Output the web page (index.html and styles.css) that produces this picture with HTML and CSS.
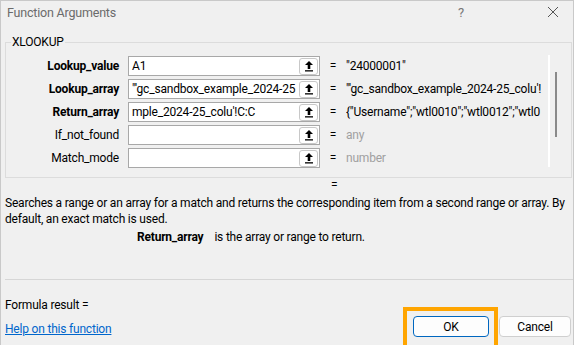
FILE: index.html
```html
<!DOCTYPE html>
<html>
<head>
	<title>Function Arguments</title>
	<link rel="stylesheet" href="styles.css">
</head>
<body>
<div class="dialog">
	<div class="titlebar">
		<span class="title">Function Arguments</span>
		<span class="tb-help">?</span>
		<span class="tb-close">
			<svg width="12" height="12" viewBox="0 0 12 12"><path d="M1 1L11 11M11 1L1 11" stroke="#555" stroke-width="1"/></svg>
		</span>
	</div>

	<fieldset class="group">
		<legend>XLOOKUP</legend>
		<div class="args">
			<div class="rows">
				<div class="row">
					<span class="label req">Lookup_value</span>
					<span class="box"><span class="box-text">A1</span><span class="ref"><svg width="10" height="12" viewBox="0 0 10 12"><path d="M5 1L9 5H6.3V9H3.7V5H1Z" fill="#000"/><rect x="1" y="10.2" width="8" height="1.3" fill="#000"/></svg></span></span>
					<span class="eq">=</span>
					<span class="val">"24000001"</span>
				</div>
				<div class="row">
					<span class="label req">Lookup_array</span>
					<span class="box"><span class="box-text">"'gc_sandbox_example_2024-25</span><span class="ref"><svg width="10" height="12" viewBox="0 0 10 12"><path d="M5 1L9 5H6.3V9H3.7V5H1Z" fill="#000"/><rect x="1" y="10.2" width="8" height="1.3" fill="#000"/></svg></span></span>
					<span class="eq">=</span>
					<span class="val">"'gc_sandbox_example_2024-25_colu'!</span>
				</div>
				<div class="row">
					<span class="label req">Return_array</span>
					<span class="box"><span class="box-text">mple_2024-25_colu'!C:C</span><span class="ref"><svg width="10" height="12" viewBox="0 0 10 12"><path d="M5 1L9 5H6.3V9H3.7V5H1Z" fill="#000"/><rect x="1" y="10.2" width="8" height="1.3" fill="#000"/></svg></span></span>
					<span class="eq">=</span>
					<span class="val">{"Username";"wtl0010";"wtl0012";"wtl0</span>
				</div>
				<div class="row">
					<span class="label">If_not_found</span>
					<span class="box"><span class="box-text"></span><span class="ref"><svg width="10" height="12" viewBox="0 0 10 12"><path d="M5 1L9 5H6.3V9H3.7V5H1Z" fill="#000"/><rect x="1" y="10.2" width="8" height="1.3" fill="#000"/></svg></span></span>
					<span class="eq">=</span>
					<span class="val hint">any</span>
				</div>
				<div class="row">
					<span class="label">Match_mode</span>
					<span class="box"><span class="box-text"></span><span class="ref"><svg width="10" height="12" viewBox="0 0 10 12"><path d="M5 1L9 5H6.3V9H3.7V5H1Z" fill="#000"/><rect x="1" y="10.2" width="8" height="1.3" fill="#000"/></svg></span></span>
					<span class="eq">=</span>
					<span class="val hint">number</span>
				</div>
			</div>
			<div class="scroll"><div class="thumb"></div></div>
		</div>
	</fieldset>

	<div class="result-eq">=</div>

	<p class="desc">Searches a range or an array for a match and returns the corresponding item from a second range or array. By default, an exact match is used.</p>

	<p class="argdesc"><b>Return_array</b><span>is the array or range to return.</span></p>

	<div class="footer">
		<div class="footer-left">
			<div class="formula">Formula result =</div>
			<a class="help" href="#">Help on this function</a>
		</div>
		<div class="buttons">
			<span class="focus"><button class="btn ok">OK</button></span>
			<button class="btn">Cancel</button>
		</div>
	</div>
</div>
</body>
</html>
```

FILE: styles.css
```css
html, body {
	margin:0;
	padding:0;
}
body {
	background-color:#f0f0f0;
	font-family:Roboto, "Noto Sans", sans-serif;
	font-size:12px;
	letter-spacing:-0.2px;
	color:#000;
	width:574px;
	height:345px;
	overflow:hidden;
}
.dialog {
	height:345px;
	box-sizing:border-box;
	border:1px solid #c9c9c9;
	border-bottom:none;
	display:flex;
	flex-direction:column;
}
.titlebar {
	height:24px;
	box-sizing:border-box;
	padding:0 0 2px 6px;
	flex:none;
	display:flex;
	align-items:center;
	color:#6b6b6b;
	font-size:12.5px;
}
.title {
	flex:1;
}
.tb-help {
	width:12px;
	margin-right:77px;
	font-size:13px;
	color:#777;
}
.tb-close {
	width:12px;
	margin-right:14px;
	display:flex;
}
.group {
	flex:none;
	margin:10px 1px 0 4px;
	padding:7px 0 0 0;
	border:1px solid #dcdcdc;
	height:143px;
	box-sizing:border-box;
}
.group legend {
	padding:0 1px;
	margin-left:5px;
	line-height:14px;
}
.args {
	display:flex;
}
.rows {
	display:flex;
	flex-direction:column;
	gap:3px;
	width:542px;
	flex:none;
}
.row {
	display:flex;
	align-items:center;
	height:20px;
}
.label {
	width:113px;
	flex:none;
	text-align:right;
	white-space:nowrap;
}
.label.req {
	font-weight:bold;
}
.box {
	width:192px;
	flex:none;
	margin-left:9px;
	height:20px;
	box-sizing:border-box;
	border:1px solid #a8a8a8;
	background:#fff;
	display:flex;
	align-items:center;
	overflow:hidden;
}
.box-text {
	flex:1;
	min-width:0;
	padding-left:3px;
	white-space:nowrap;
	overflow:hidden;
}
.ref {
	width:19px;
	height:17px;
	flex:none;
	box-sizing:border-box;
	border:1px solid #c8c8c8;
	border-radius:3px;
	margin-right:1px;
	display:flex;
	align-items:center;
	justify-content:center;
	background:#fff;
}
.eq {
	width:26px;
	flex:none;
	text-align:center;
}
.val {
	flex:1;
	min-width:0;
	margin-right:6px;
	white-space:nowrap;
	overflow:hidden;
}
.hint {
	color:#a0a0a0;
}
.scroll {
	width:22px;
	flex:none;
	height:112px;
	margin-top:-1px;
	border-left:2px solid #fff;
	box-sizing:border-box;
	padding:17px 0 0 5px;
}
.thumb {
	width:2px;
	height:65px;
	background:#8a8a8a;
}
.result-eq {
	padding-left:330px;
	margin-top:1px;
	height:12px;
	line-height:12px;
}
.desc {
	margin:4px 0 0 4px;
	line-height:16px;
	width:566px;
}
.argdesc {
	margin:2px 0 0 136px;
	line-height:16px;
}
.argdesc span {
	margin-left:11px;
}
.footer {
	margin:auto 0 0 4px;
	border-top:1px solid #d6d6d6;
	display:flex;
	justify-content:space-between;
	align-items:flex-end;
}
.footer-left {
	padding:17px 0 8px 0;
	display:flex;
	flex-direction:column;
	align-items:flex-start;
	line-height:16px;
}
.help {
	color:#0066cc;
	margin-top:8px;
}
.buttons {
	display:flex;
	align-items:flex-start;
	margin-right:2px;
}
.focus {
	border:4px solid #ffa500;
	border-bottom:none;
	padding:5px 5px 8px 6px;
	display:flex;
}
.btn {
	font-family:inherit;
	font-size:12px;
	letter-spacing:-0.2px;
	width:72px;
	height:21px;
	background:#fdfdfd;
	border:1px solid #cfcfcf;
	border-radius:4px;
	padding:0;
	margin:9px 0 0 1px;
	color:#000;
}
.btn.ok {
	width:76px;
	border-color:#0067c0;
	margin:0;
}
```
